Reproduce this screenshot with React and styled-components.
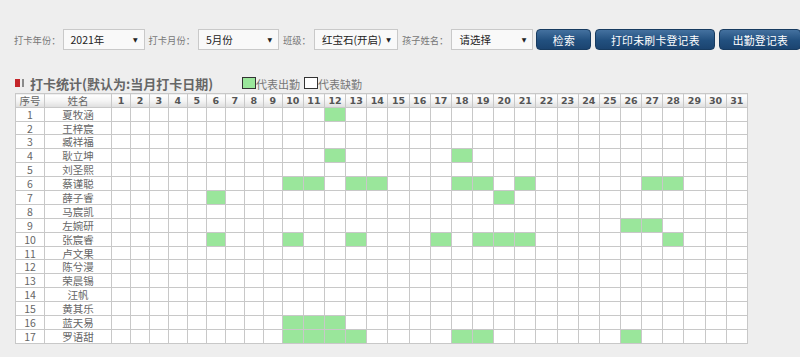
import styled, { createGlobalStyle } from "styled-components";

const GlobalStyle = createGlobalStyle`
  html, body {
    margin: 0;
    padding: 0;
    background: #eeeeee;
  }
  body {
    font-family: "Noto Sans CJK SC", "Liberation Sans", sans-serif;
  }
`;

const students = [
  "夏牧涵", "王梓宸", "臧祥福", "耿立坤", "刘圣熙", "蔡谨聪", "薛子睿", "马宸凯", "左婉研",
  "张宸睿", "卢文果", "陈兮漫", "荣晨锡", "汪帆", "黄其乐", "蓝天易", "罗语甜",
];

// 每个孩子当月出勤的日期
const attended = [
  [12], [], [], [12, 18], [], [10, 11, 13, 14, 18, 19, 21, 27, 28], [6, 20], [], [26, 27],
  [6, 10, 13, 17, 19, 20, 21, 28], [], [], [], [], [], [10, 11, 12], [10, 11, 12, 13, 18, 19, 26],
];

const days = Array.from({ length: 31 }, (_, i) => i + 1);

const Page = styled.div`
  padding: 29px 0 0 14px;
  width: 800px;
  height: 357px;
  box-sizing: border-box;
  overflow: hidden;
`;

const Toolbar = styled.div`
  display: flex;
  align-items: center;
  height: 21px;
  white-space: nowrap;
`;

const Label = styled.span`
  flex-shrink: 0;
  font-size: 9.3px;
  color: #777;
  margin: 0 ${({ first }) => (first ? "2px 0 0" : "3px 0 4px")};
`;

const Select = styled.div`
  display: flex;
  align-items: center;
  justify-content: space-between;
  box-sizing: border-box;
  flex-shrink: 0;
  width: ${({ w }) => w}px;
  height: 21px;
  padding: 0 6px 0 7px;
  background: #f9f9f9;
  border: 1px solid #c9c9c9;
  font-size: 10.5px;
  color: #222;
`;

const Arrow = styled.span`
  font-size: 6px;
  color: #222;
  font-family: "DejaVu Sans", sans-serif;
`;

const Button = styled.button`
  box-sizing: border-box;
  width: ${({ w }) => w}px;
  height: 21px;
  margin-left: ${({ gap }) => gap}px;
  padding: 0;
  border: 1px solid #173b60;
  border-radius: 4px;
  background: linear-gradient(#44719f, #22507f 55%, #1b4470);
  color: #fff;
  font-family: "Noto Sans CJK SC", sans-serif;
  font-size: 10.8px;
  letter-spacing: 0.3px;
  flex-shrink: 0;
`;

const TitleRow = styled.div`
  display: flex;
  align-items: center;
  height: 16px;
  margin: 25px 0 2px 1px;
`;

const TitleIcon = styled.span`
  display: inline-block;
  width: 5px;
  height: 8px;
  background: #c4252a;
  position: relative;
  &::after {
    content: "";
    position: absolute;
    left: 7px;
    top: 0;
    width: 2px;
    height: 8px;
    background: #8a8a8a;
  }
`;

const Title = styled.span`
  margin-left: 10px;
  font-size: 13px;
  font-weight: bold;
  color: #666;
`;

const LegendBox = styled.span`
  display: inline-block;
  box-sizing: border-box;
  width: 14px;
  height: 12px;
  margin-left: ${({ gap }) => gap}px;
  border: 1px solid #333;
  background: ${({ on }) => (on ? "#9ae69b" : "#fff")};
`;

const LegendText = styled.span`
  font-size: 11px;
  color: #777;
  margin-top: 2px;
`;

const Table = styled.table`
  border-collapse: collapse;
  table-layout: fixed;
  width: 732px;
  margin-left: 1px;
  background: #fff;
  font-size: 10.5px;
`;

const HeadCell = styled.th`
  height: 12.7px;
  padding: 0;
  border: 1px solid #c8c8c8;
  background: linear-gradient(#ffffff, #f4f4f4 50%, #dedede);
  color: ${({ num }) => (num ? "#555" : "#666")};
  font-family: ${({ num }) => (num ? '"DejaVu Sans", sans-serif' : '"Noto Sans CJK SC", sans-serif')};
  font-weight: ${({ num }) => (num ? "bold" : "normal")};
  font-size: ${({ num }) => (num ? "9.5px" : "10.5px")};
  line-height: 11px;
  text-align: center;
`;

const Cell = styled.td`
  height: 12.9px;
  padding: 0;
  border: 1px solid #c8c8c8;
  color: #666;
  line-height: 11px;
  text-align: center;
  background: ${({ on }) => (on ? "#9ae69b" : "#fff")};
`;

export default function App() {
  return (
    <>
      <GlobalStyle />
      <Page>
        <Toolbar>
          <Label first>打卡年份：</Label>
          <Select w={82}>
            <span>2021年</span>
            <Arrow>▼</Arrow>
          </Select>
          <Label>打卡月份：</Label>
          <Select w={81}>
            <span>5月份</span>
            <Arrow>▼</Arrow>
          </Select>
          <Label>班级：</Label>
          <Select w={84}>
            <span>红宝石(开启)</span>
            <Arrow>▼</Arrow>
          </Select>
          <Label>孩子姓名：</Label>
          <Select w={82}>
            <span>请选择</span>
            <Arrow>▼</Arrow>
          </Select>
          <Button w={55} gap={3}>检索</Button>
          <Button w={120} gap={4}>打印未刷卡登记表</Button>
          <Button w={82} gap={4}>出勤登记表</Button>
        </Toolbar>

        <TitleRow>
          <TitleIcon />
          <Title>打卡统计(默认为:当月打卡日期)</Title>
          <LegendBox on gap={29} />
          <LegendText>代表出勤</LegendText>
          <LegendBox gap={4} />
          <LegendText>代表缺勤</LegendText>
        </TitleRow>

        <Table>
          <colgroup>
            <col style={{ width: 29 }} />
            <col style={{ width: 67 }} />
            {days.map((d) => (
              <col key={d} style={{ width: d < 10 ? 18.97 : 21.15 }} />
            ))}
          </colgroup>
          <thead>
            <tr>
              <HeadCell>序号</HeadCell>
              <HeadCell>姓名</HeadCell>
              {days.map((d) => (
                <HeadCell num key={d}>
                  {d}
                </HeadCell>
              ))}
            </tr>
          </thead>
          <tbody>
            {students.map((name, i) => (
              <tr key={name}>
                <Cell>{i + 1}</Cell>
                <Cell>{name}</Cell>
                {days.map((d) => (
                  <Cell key={d} on={attended[i].includes(d) ? 1 : 0} />
                ))}
              </tr>
            ))}
          </tbody>
        </Table>
      </Page>
    </>
  );
}
